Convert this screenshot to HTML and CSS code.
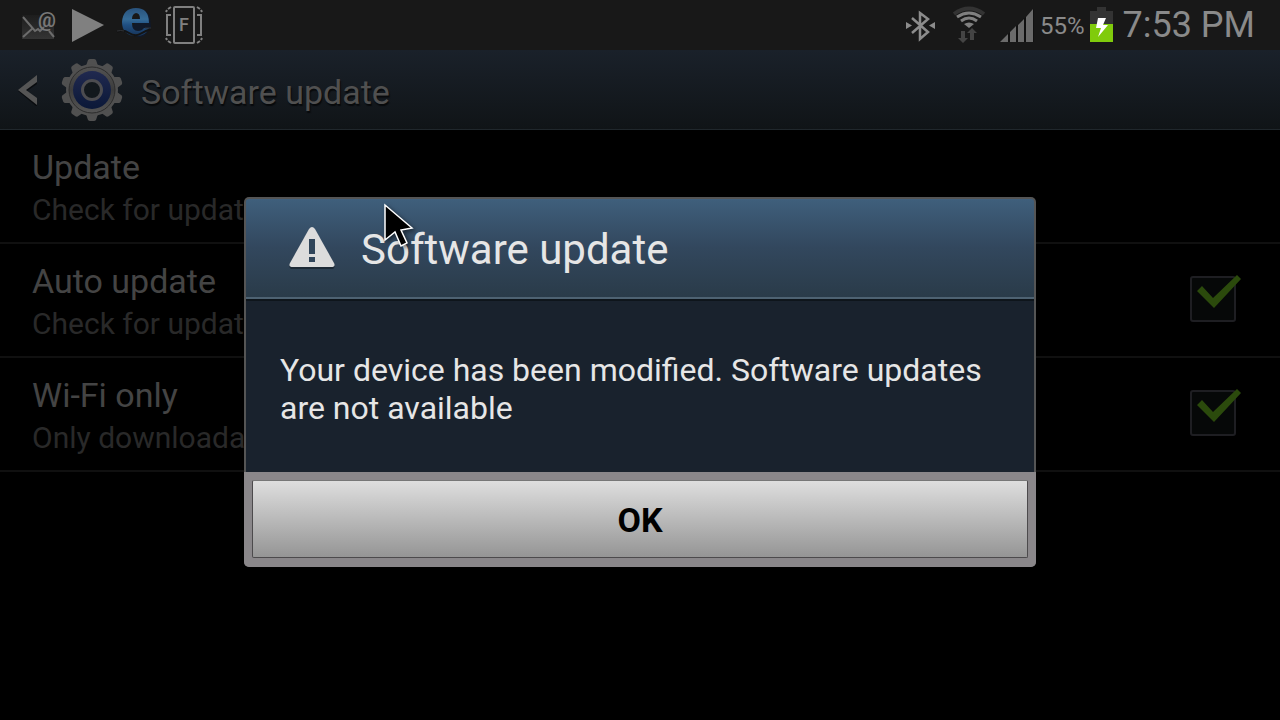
FILE: index.html
```html
<!DOCTYPE html>
<html lang="en">
<head>
    <meta charset="UTF-8">
    <meta name="viewport" content="width=device-width, initial-scale=1.0">
    <title>Software update</title>
    <link rel="stylesheet" href="styles.css">
</head>
<body>

<div class="status-bar">
    <div class="notifications">
        <svg class="icon mail" width="36" height="50" viewBox="0 0 36 50">
            <defs>
                <linearGradient id="mailFill" x1="0" y1="0" x2="0" y2="1">
                    <stop offset="0" stop-color="#1d1d1d"/>
                    <stop offset="1" stop-color="#343434"/>
                </linearGradient>
            </defs>
            <rect x="1" y="15" width="32" height="24" fill="url(#mailFill)"/>
            <path d="M2 17L14 31L17 29L19 31L23 27M2 37L12 28M28 31L33 37" fill="none" stroke="#6c6c6c" stroke-width="2"/>
            <text x="17" y="27" font-size="20" font-weight="bold" fill="#777">@</text>
        </svg>
        <svg class="icon" width="32" height="50" viewBox="0 0 32 50">
            <path d="M0 9L32 25L0 42Z" fill="#808080"/>
        </svg>
        <svg class="icon" width="36" height="50" viewBox="0 0 36 50">
            <defs>
                <linearGradient id="ieFill" x1="0" y1="0" x2="0" y2="1">
                    <stop offset="0" stop-color="#29527c"/>
                    <stop offset="0.4" stop-color="#356b97"/>
                    <stop offset="0.6" stop-color="#205083"/>
                    <stop offset="1" stop-color="#173458"/>
                </linearGradient>
            </defs>
            <path d="M12 32Q19 39 28 36L35 28L34 16L29 10Z" fill="#10192a"/>
            <path d="M33 23H16Q16 31 22 31Q26 31 28 28H33Q30 36 21 36Q6 36 6 22Q7 8 20 8Q33 8 33 23ZM16 19H24Q24 13 20 13Q16 14 16 19Z" fill="url(#ieFill)" fill-rule="evenodd"/>
            <path d="M1 32Q7 29 13 33T24 34T35 29" fill="none" stroke="#141414" stroke-width="2"/>
            <path d="M1 31Q5 30 8 31M29 28H35" fill="none" stroke="#303236"/>
        </svg>
        <svg class="icon" width="40" height="50" viewBox="0 0 40 50">
            <g fill="none" stroke="#808080" stroke-width="2">
                <rect x="10" y="7" width="20" height="36" rx="1"/>
                <path d="M7 15H3V35H7M33 15H37V35H33"/>
                <path d="M2 12L3 10M4 9L7 7M38 12L37 10M36 9L33 7M2 38L3 40M4 41L7 43M38 38L37 40M36 41L33 43"/>
            </g>
            <text x="15" y="31" font-size="18" font-weight="500" fill="#808080">F</text>
        </svg>
    </div>
    <div class="indicators">
        <svg class="icon bluetooth" width="30" height="50" viewBox="0 0 30 50">
            <path d="M6 18L22 32L14 39V13L22 19L6 33" fill="none" stroke="#8c8c8c" stroke-width="2.500"/>
            <path d="M0 22L6 25.500L0 29ZM29 22L23 25.500L29 29Z" fill="#8c8c8c"/>
        </svg>
        <svg class="icon wifi" width="34" height="50" viewBox="0 0 34 50">
            <path d="M2 14Q17 3 32 14" fill="none" stroke="#333" stroke-width="4"/>
            <g fill="none" stroke="#808080" stroke-width="3">
                <path d="M5 17Q17 9 29 17M9 21Q17 15 25 21"/>
            </g>
            <path d="M12 24Q17 21 22 24L17 28Z" fill="#808080"/>
            <path d="M9 31H13V38H16L11 43L6 38H9ZM18 40V33H15L20 28L25 33H22V40Z" fill="#444"/>
        </svg>
        <svg class="icon signal" width="34" height="50" viewBox="0 0 34 50">
            <path d="M0 42L34 9V42Z" fill="#111"/>
            <path d="M0 42L8 34V42ZM10 32L16 26V42H10ZM18 25L24 19V42H18ZM26 17L33 9V42H26Z" fill="#6b6b6b"/>
        </svg>
        <span class="percent">55%</span>
        <svg class="icon battery" width="23" height="50" viewBox="0 0 23 50">
            <path d="M7 7H16V11H23V24H0V11H7Z" fill="#333"/>
            <rect y="24" width="23" height="18" fill="#80cb0c"/>
            <path d="M8 18H16L13 25H18L8 37L11 28H6Z" fill="#fff"/>
        </svg>
        <span class="clock">7:53 PM</span>
    </div>
</div>

<header class="action-bar">
    <a class="up" href="#" aria-label="Back">
        <svg width="20" height="32" viewBox="0 0 20 32">
            <path d="M19 3V10L9 17L19 26V33L0 17Z" fill="#0a0c0f"/>
            <path d="M19 1V8L8 16L19 24V31L0 16Z" fill="#555"/>
        </svg>
        <svg class="gear" width="62" height="64" viewBox="-31 -32 62 64">
            <defs>
                <linearGradient id="gearFill" x1="0" y1="0" x2="0" y2="1">
                    <stop offset="0" stop-color="#525252"/>
                    <stop offset="0.5" stop-color="#3c3c3c"/>
                    <stop offset="1" stop-color="#555"/>
                </linearGradient>
                <linearGradient id="gearBlue" x1="0" y1="0" x2="0" y2="1">
                    <stop offset="0" stop-color="#20294f"/>
                    <stop offset="1" stop-color="#0b1838"/>
                </linearGradient>
                <path id="tooth" d="M-6 -24L-4 -30Q-3 -31 -2 -31H2Q3 -31 4 -30L6 -24Z"/>
            </defs>
            <g fill="#505050">
                <use href="#tooth"/>
                <use href="#tooth" transform="rotate(36)"/>
                <use href="#tooth" transform="rotate(72)"/>
                <use href="#tooth" transform="rotate(108)"/>
                <use href="#tooth" transform="rotate(144)"/>
                <use href="#tooth" transform="rotate(180)"/>
                <use href="#tooth" transform="rotate(216)"/>
                <use href="#tooth" transform="rotate(252)"/>
                <use href="#tooth" transform="rotate(288)"/>
                <use href="#tooth" transform="rotate(324)"/>
            </g>
            <circle r="26" fill="#505050"/>
            <circle r="23" fill="url(#gearFill)" stroke="#2c2c2c"/>
            <circle r="19" fill="url(#gearBlue)"/>
            <circle r="9.500" fill="#12181d" stroke="#4c4c50" stroke-width="3"/>
        </svg>
    </a>
    <h1>Software update</h1>
</header>

<main class="settings">
    <div class="row">
        <div class="label">
            <span class="name">Update</span>
            <span class="summary">Check for updates</span>
        </div>
    </div>
    <div class="row">
        <label class="label" for="auto">
            <span class="name">Auto update</span>
            <span class="summary">Check for updates</span>
        </label>
        <div class="check">
            <input type="checkbox" id="auto" checked>
            <svg width="52" height="48" viewBox="0 -2 52 48">
                <path d="M7 15L12 10L23 22L47 -1L51 3L24 32Z"/>
            </svg>
        </div>
    </div>
    <div class="row">
        <label class="label" for="wifi">
            <span class="name">Wi-Fi only</span>
            <span class="summary">Only downloadable via Wi-Fi</span>
        </label>
        <div class="check">
            <input type="checkbox" id="wifi" checked>
            <svg width="52" height="48" viewBox="0 -2 52 48">
                <path d="M7 15L12 10L23 22L47 -1L51 3L24 32Z"/>
            </svg>
        </div>
    </div>
</main>

<div class="overlay">
    <div class="dialog" role="alertdialog" aria-labelledby="dialogTitle" aria-describedby="dialogText">
        <div class="dialog-header">
            <svg width="46" height="42" viewBox="0 0 46 42">
                <path d="M20 3Q23 -1 26 3L45 37Q47 42 42 42H4Q-1 42 1 37Z" fill="#1d2a36"/>
                <path d="M20 2Q23 -2 26 2L45 36Q47 40 42 40H4Q-1 40 1 36Z" fill="#dcdcdc"/>
                <path d="M20 12H26V27H20ZM20 30H26V35H20Z" fill="#30455a"/>
            </svg>
            <h2 id="dialogTitle">Software update</h2>
        </div>
        <p class="message" id="dialogText">Your device has been modified. Software updates are not available</p>
        <div class="dialog-footer">
            <button class="ok" type="button">OK</button>
        </div>
        <!-- Mouse pointer, floats over the title -->
        <svg class="pointer" width="36" height="52" viewBox="0 0 36 52">
            <path d="M4 4V39L14 31L20 45L26 42L20 29L31 27Z" fill="#000" stroke="#fff" stroke-width="1.500"/>
        </svg>
    </div>
</div>

</body>
</html>
```
FILE: styles.css
```css
* {
    box-sizing: border-box;
}
body {
    margin: 0;
    min-height: 100vh;
    background-color: #000;
    font-family: Roboto, sans-serif;
}
h1, h2, p {
    margin: 0;
    font-weight: normal;
}
svg {
    display: block;
    flex: none;
}
/* Status bar */
.status-bar {
    display: flex;
    justify-content: space-between;
    height: 50px;
    padding: 0 25px 0 21px;
    background-color: #181818;
    color: #8a8a8a;
}
.notifications, .indicators {
    display: flex;
    align-items: center;
}
.notifications {
    gap: 12px;
}
.mail {
    margin-right: 3px;
}
.wifi {
    margin: 0 14px 0 16px;
}
.percent {
    margin: 0 5px 0 6px;
    font-size: 24px;
    padding-top: 2px;
}
.clock {
    margin-left: 10px;
    font-size: 36px;
}
/* Action bar */
.action-bar {
    display: flex;
    align-items: center;
    height: 80px;
    padding: 0 18px;
    gap: 18px;
    background: linear-gradient(#1a212a, #101417);
    border-bottom: 1px solid #20272c;
}
.up {
    display: flex;
    align-items: center;
    gap: 23px;
}
.action-bar h1 {
    padding-top: 4px;
    font-size: 34px;
    color: #505050;
    text-shadow: 1px 2px 1px #080a0c;
}
/* Settings list */
.row {
    display: flex;
    justify-content: space-between;
    align-items: center;
    height: 114px;
    padding: 0 44px 0 32px;
    border-bottom: 2px solid #101010;
}
.label {
    display: flex;
    flex-direction: column;
    padding-top: 4px;
}
.name {
    font-size: 34px;
    line-height: 44px;
    color: #444;
}
.summary {
    font-size: 30px;
    line-height: 42px;
    color: #292929;
}
.check {
    position: relative;
    margin-bottom: 2px;
}
.check input {
    appearance: none;
    display: block;
    width: 46px;
    height: 46px;
    margin: 0;
    border: 2px solid #1e1e22;
    border-radius: 3px;
    background-color: #060808;
}
/* The tick reaches past the box */
.check svg {
    position: absolute;
    top: -2px;
    left: 0;
    fill: #2b4a0c;
    pointer-events: none;
}
.check input:not(:checked) + svg {
    display: none;
}
/* Dialog */
.overlay {
    position: fixed;
    top: 0;
    left: 0;
    width: 100%;
    height: 100%;
    display: flex;
    justify-content: center;
    align-items: center;
    padding-top: 44px;
}
.dialog {
    position: relative;
    width: 90%;
    max-width: 792px;
    border-radius: 5px;
    background-color: #555;
    overflow: hidden;
}
.dialog-header {
    display: flex;
    align-items: center;
    gap: 26px;
    height: 100px;
    margin: 2px 2px 0;
    padding: 0 43px;
    border-bottom: 2px solid #4e6272;
    border-radius: 3px 3px 0 0;
    background: linear-gradient(#3f5f7c, #32475d 50%, #2a3b49);
}
.dialog-header h2 {
    padding-top: 2px;
    font-size: 42px;
    color: #e6e6e6;
}
.message {
    margin: 0 2px;
    padding: 50px 34px 45px;
    border-top: 2px solid #0e151b;
    background-color: #19222d;
    font-size: 32px;
    line-height: 38px;
    color: #e6e6e6;
}
.dialog-footer {
    padding: 8px 8px 9px;
    background-color: #8a878a;
}
.ok {
    display: block;
    width: 100%;
    height: 78px;
    padding: 2px 0 0;
    border: 1px solid #4c4a4c;
    border-top-color: #777;
    border-radius: 2px;
    background: linear-gradient(#dedede, #959595);
    font-family: inherit;
    font-size: 34px;
    font-weight: bold;
    color: #000;
}
.pointer {
    position: absolute;
    top: 4px;
    left: 137px;
    filter: drop-shadow(2px 2px 2px rgba(0, 0, 0, 0.5));
}
```
